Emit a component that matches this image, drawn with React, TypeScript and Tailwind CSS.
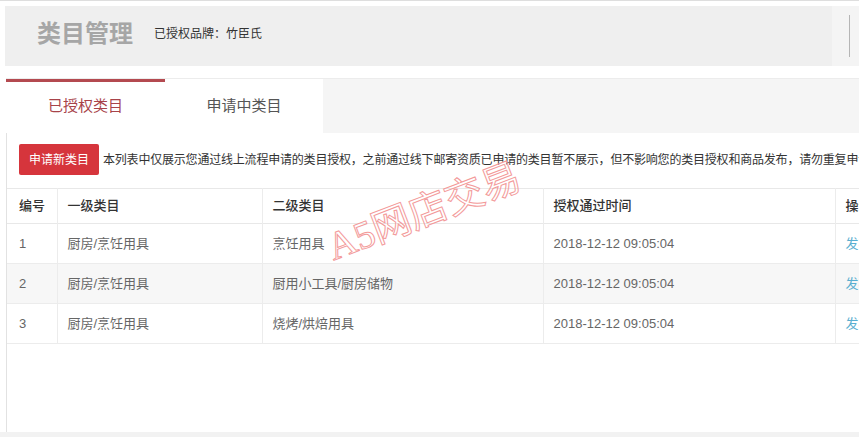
const rows = [
  { id: "1", first: "厨房/烹饪用具", second: "烹饪用具", time: "2018-12-12 09:05:04" },
  { id: "2", first: "厨房/烹饪用具", second: "厨用小工具/厨房储物", time: "2018-12-12 09:05:04" },
  { id: "3", first: "厨房/烹饪用具", second: "烧烤/烘焙用具", time: "2018-12-12 09:05:04" },
];

export default function App() {
  return (
    <div className="relative w-[859px] h-[437px] overflow-hidden bg-white font-['Liberation_Sans','Noto_Sans_CJK_SC',sans-serif]">
      <div className="h-px bg-[#dedede]" />
      {/* header */}
      <div className="pl-[5px] pt-[5px]">
        <div className="flex h-[60px]">
          <div className="flex flex-1 items-center bg-[#efefef] pl-[32px] pb-[4px]">
            <h1 className="text-[24px] font-bold text-[#a6a6a6] leading-none">类目管理</h1>
            <span className="ml-[21px] text-[12px] text-[#333]">已授权品牌：竹臣氏</span>
          </div>
          <div className="flex w-[27px] items-center bg-[#f4f4f4] pl-[17px]">
            <div className="h-[42px] w-px bg-[#b5b5b5]" />
          </div>
        </div>
      </div>

      {/* tabs */}
      <div className="mt-[12px] ml-[6px] flex h-[55px] bg-[#f5f5f5] border-t border-[#ececec]">
        <div className="flex w-[159px] items-center justify-center border-t-[3px] border-[#b44a50] bg-white pb-[3px] text-[15px] text-[#a8434a]">
          已授权类目
        </div>
        <div className="flex w-[158px] items-center justify-center border-t-[3px] border-white bg-white pb-[3px] text-[15px] text-[#555]">
          申请中类目
        </div>
      </div>

      {/* panel */}
      <div className="ml-[6px] h-[299px] border-l border-[#e2e2e2] bg-white overflow-hidden">
        <div className="flex items-center pl-[12px] pt-[11px]">
          <button className="h-[31px] w-[80px] shrink-0 rounded-[2px] bg-[#d6353c] text-[12px] text-white">
            申请新类目
          </button>
          <p className="ml-[4px] whitespace-nowrap text-[12px] tracking-[-0.2px] text-[#333]">
            本列表中仅展示您通过线上流程申请的类目授权，之前通过线下邮寄资质已申请的类目暂不展示，但不影响您的类目授权和商品发布，请勿重复申请
          </p>
        </div>

        <table className="mt-[13px] w-[928px] table-fixed border-collapse text-[13px]">
          <colgroup>
            <col className="w-[50px]" />
            <col className="w-[205px]" />
            <col className="w-[281px]" />
            <col className="w-[292px]" />
            <col className="w-[100px]" />
          </colgroup>
          <thead>
            <tr className="h-[35px] border-y border-[#e8e8e8] text-left text-[#333]">
              <th className="pl-[12px] font-medium">编号</th>
              <th className="border-l border-[#ececec] pl-[10px] font-medium">一级类目</th>
              <th className="border-l border-[#ececec] pl-[10px] font-medium">二级类目</th>
              <th className="border-l border-[#ececec] pl-[10px] font-medium">授权通过时间</th>
              <th className="border-l border-[#ececec] pl-[10px] font-medium">操作</th>
            </tr>
          </thead>
          <tbody className="text-[#666]">
            {rows.map((r, i) => (
              <tr key={r.id} className={`h-[40px] border-b border-[#ececec] ${i === 1 ? "bg-[#f7f7f7]" : "bg-white"}`}>
                <td className="pl-[12px]">{r.id}</td>
                <td className="border-l border-[#ececec] pl-[10px]">{r.first}</td>
                <td className="border-l border-[#ececec] pl-[10px]">{r.second}</td>
                <td className="border-l border-[#ececec] pl-[10px]">{r.time}</td>
                <td className="border-l border-[#ececec] pl-[10px] text-[#5aaed0]">发布商品</td>
              </tr>
            ))}
          </tbody>
        </table>
      </div>
      <div className="h-[5px] bg-[#f2f2f2]" />

      {/* watermark */}
      <div className="pointer-events-none absolute left-[322px] top-[192px] rotate-[-21deg] whitespace-nowrap font-['Liberation_Serif','Noto_Sans_CJK_SC',serif] text-[39px] leading-none text-transparent [-webkit-text-stroke:1px_#f39a9a]">
        A5网店交易
      </div>
    </div>
  );
}
